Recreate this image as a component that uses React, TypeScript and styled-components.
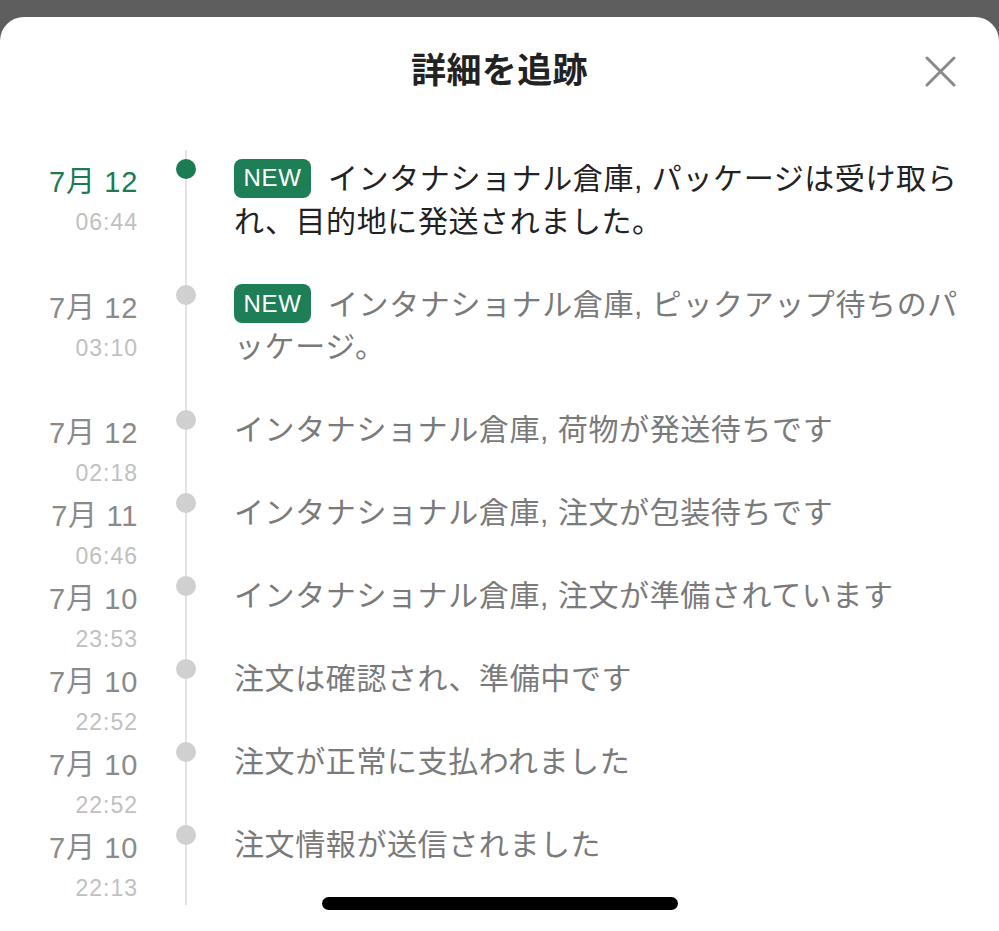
import React from "react";
import styled, { createGlobalStyle } from "styled-components";

const Global = createGlobalStyle`
  html, body { margin: 0; padding: 0; }
  body {
    background: #5e5e5e;
    font-family: "Liberation Sans", "Noto Sans CJK JP", sans-serif;
    -webkit-font-smoothing: antialiased;
  }
`;

const Page = styled.div`
  padding-top: 17px;
  width: 999px;
  height: 931px;
  box-sizing: border-box;
  overflow: hidden;
`;

const Sheet = styled.div`
  position: relative;
  background: #ffffff;
  border-radius: 24px 24px 0 0;
  height: 914px;
`;

const Header = styled.header`
  display: grid;
  grid-template-columns: 1fr auto 1fr;
  align-items: center;
  padding-top: 28px;
  height: 46px;
`;

const Title = styled.h1`
  grid-column: 2;
  margin: 0;
  font-family: "Noto Sans CJK JP", sans-serif;
  font-weight: 700;
  font-size: 35px;
  line-height: 46px;
  color: #222222;
  letter-spacing: 0.4px;
`;

const Close = styled.button`
  grid-column: 3;
  justify-self: end;
  margin-right: 43px;
  margin-top: 6px;
  width: 31px;
  height: 31px;
  padding: 0;
  border: none;
  background: transparent;
  display: flex;
  align-items: center;
  justify-content: center;
`;

const List = styled.ol`
  position: relative;
  list-style: none;
  margin: 59px 0 0;
  padding: 0 39px 6px 0;
  &::before {
    content: "";
    position: absolute;
    left: 185px;
    top: 0;
    bottom: 0;
    width: 2px;
    background: #e4e4e4;
  }
`;

const Row = styled.li`
  display: grid;
  grid-template-columns: 138px 96px 1fr;
  align-items: start;
  padding-top: 8px;
`;

const When = styled.div`
  text-align: right;
  padding-top: 5px;
  height: 75px;
  box-sizing: border-box;
`;

const DateText = styled.div<{ $active?: boolean }>`
  font-size: 29px;
  line-height: 38px;
  letter-spacing: 0.7px;
  color: ${(p) => (p.$active ? "#1d7a52" : "#8a8a8a")};
`;

const TimeText = styled.div`
  font-size: 23px;
  line-height: 42px;
  letter-spacing: 1px;
  color: #c0c0c0;
`;

const Axis = styled.div`
  display: flex;
  justify-content: center;
  padding-top: 1px;
`;

const Dot = styled.span<{ $active?: boolean }>`
  position: relative;
  z-index: 1;
  width: 20px;
  height: 20px;
  border-radius: 50%;
  background: ${(p) => (p.$active ? "#1b7b53" : "#d0d0d0")};
`;

const Content = styled.p<{ $active?: boolean }>`
  margin: 0;
  padding-bottom: 33px;
  font-size: 30px;
  line-height: 42px;
  letter-spacing: 0.6px;
  color: ${(p) => (p.$active ? "#222222" : "#7a7a7a")};
`;

const Badge = styled.span`
  display: inline-flex;
  align-items: center;
  justify-content: center;
  vertical-align: middle;
  position: relative;
  top: -3px;
  width: 77px;
  height: 39px;
  margin-right: 17px;
  border-radius: 8px;
  background: #1e7f56;
  color: #ffffff;
  font-family: "Liberation Sans", sans-serif;
  font-size: 24px;
  letter-spacing: 0.6px;
`;

const HomeBar = styled.div`
  position: absolute;
  left: 50%;
  bottom: 21px;
  transform: translateX(-50%);
  width: 356px;
  height: 13px;
  border-radius: 7px;
  background: #000000;
`;

type Event = {
  date: string;
  time: string;
  text: string;
  isNew?: boolean;
  active?: boolean;
};

const events: Event[] = [
  {
    date: "7月 12",
    time: "06:44",
    text: "インタナショナル倉庫, パッケージは受け取られ、目的地に発送されました。",
    isNew: true,
    active: true,
  },
  {
    date: "7月 12",
    time: "03:10",
    text: "インタナショナル倉庫, ピックアップ待ちのパッケージ。",
    isNew: true,
  },
  { date: "7月 12", time: "02:18", text: "インタナショナル倉庫, 荷物が発送待ちです" },
  { date: "7月 11", time: "06:46", text: "インタナショナル倉庫, 注文が包装待ちです" },
  { date: "7月 10", time: "23:53", text: "インタナショナル倉庫, 注文が準備されています" },
  { date: "7月 10", time: "22:52", text: "注文は確認され、準備中です" },
  { date: "7月 10", time: "22:52", text: "注文が正常に支払われました" },
  { date: "7月 10", time: "22:13", text: "注文情報が送信されました" },
];

export default function App() {
  return (
    <Page>
      <Global />
      <Sheet>
        <Header>
          <Title>詳細を追跡</Title>
          <Close aria-label="閉じる">
            <svg width="31" height="31" viewBox="0 0 31 31">
              <path
                d="M2 2 L29 29 M29 2 L2 29"
                stroke="#8a8a8a"
                strokeWidth="3"
                strokeLinecap="round"
              />
            </svg>
          </Close>
        </Header>
        <List>
          {events.map((e, i) => (
            <Row key={i}>
              <When>
                <DateText $active={e.active}>{e.date}</DateText>
                <TimeText>{e.time}</TimeText>
              </When>
              <Axis>
                <Dot $active={e.active} />
              </Axis>
              <Content $active={e.active}>
                {e.isNew && <Badge>NEW</Badge>}
                {e.text}
              </Content>
            </Row>
          ))}
        </List>
        <HomeBar />
      </Sheet>
    </Page>
  );
}
